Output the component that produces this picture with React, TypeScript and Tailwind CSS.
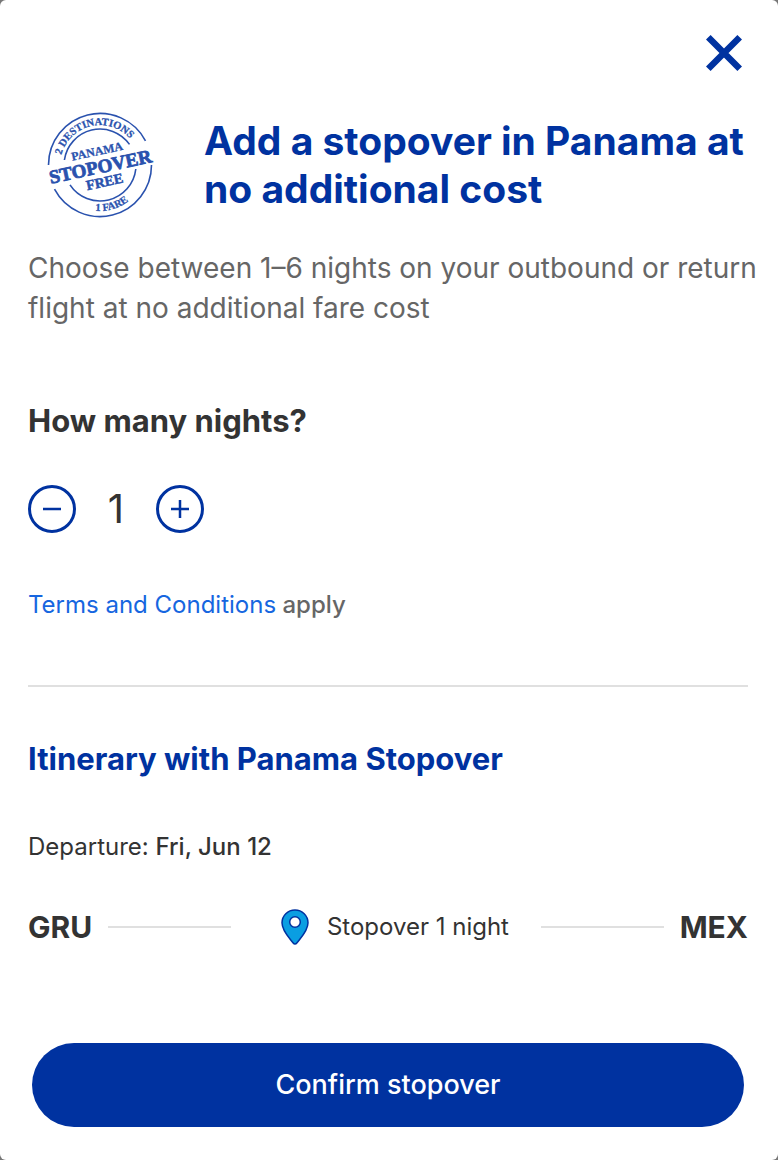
import React, { useState } from 'react';

const StampLogo: React.FC = () => (
  <svg viewBox="-54 -54 108 108" className="size-[108px] shrink-0" fill="none" role="img" aria-label="Panama Stopover">
    <defs>
      <path id="stamp-top" d="M-37.6 13.7A40 40 0 1 1 37.6 13.7" />
      <path id="stamp-bottom" d="M-46 0A46 46 0 0 0 46 0" />
    </defs>
    <g stroke="#2a52ae" strokeWidth="1.6">
      <path d="M-51.5 0A51.5 51.5 0 0 1 45.5 -24.2" />
      <path d="M-45.5 24.2A51.5 51.5 0 0 0 51.5 0" />
      <path d="M-35.6 -5A36 36 0 0 1 29.5 -20.6" />
      <path d="M-30 19.9A36 36 0 0 0 35.8 4" />
    </g>
    <g
      fill="#2a52ae"
      stroke="#2a52ae"
      strokeWidth="0.3"
      className="font-['Liberation_Serif',serif] font-bold"
      textAnchor="middle"
    >
      <text fontSize="10.5">
        <textPath href="#stamp-top" startOffset="44%">2 DESTINATIONS</textPath>
      </text>
      <text fontSize="10.5">
        <textPath href="#stamp-bottom" startOffset="59%">1 FARE</textPath>
      </text>
      <g transform="rotate(-12)">
        <text x="0" y="-10" fontSize="12">PANAMA</text>
        <text x="0" y="8" fontSize="19" strokeWidth="0.8">STOPOVER</text>
        <text x="1" y="22" fontSize="14" strokeWidth="0.5">FREE</text>
      </g>
    </g>
  </svg>
);

const PinIcon: React.FC = () => (
  <svg viewBox="0 0 28 36" className="h-9 w-7 shrink-0" aria-hidden="true">
    <path
      d="M14 1C6.8 1 1 6.6 1 13.8c0 8.4 7.500 15.200 11.200 20.200.9 1.200 2.700 1.200 3.600 0C19.500 29 27 22.200 27 13.800 27 6.600 21.200 1 14 1Z"
      fill="#0a9ee2"
      stroke="#0032a0"
      strokeWidth="1.5"
    />
    <circle cx="14" cy="13" r="5.3" fill="#fff" stroke="#0032a0" strokeWidth="1.5" />
  </svg>
);

const App: React.FC = () => {
  const [nights, setNights] = useState(1);

  return (
    <div className="min-h-screen bg-[#777] font-[Inter,sans-serif]">
      <main className="flex min-h-screen flex-col rounded-md bg-white px-7 pb-8 text-[#333]">
        <div className="flex justify-end pt-[33px]">
          <button type="button" aria-label="Close" className="mr-1.5 flex size-10 items-center justify-center">
            <svg viewBox="0 0 36 36" className="size-9" stroke="#0032a0" strokeWidth="6.5">
              <path d="M2.3 2.3L33.7 33.7M33.7 2.3L2.3 33.7" />
            </svg>
          </button>
        </div>

        <header className="mt-[38px] flex items-center gap-[50px] pl-[18px]">
          <StampLogo />
          <h1 className="text-[39px] leading-12 font-bold text-[#0032a0]">
            Add a stopover in Panama at no additional cost
          </h1>
        </header>

        <p className="-mr-3 mt-[29px] text-[28px] leading-10 text-[#666]">
          Choose between 1–6 nights on your outbound or return flight at no additional fare cost
        </p>

        <h2 className="mt-[73px] text-[31px] leading-10 font-bold">How many nights?</h2>
        <div className="mt-11 flex items-center">
          <button
            type="button"
            aria-label="Remove a night"
            onClick={() => setNights(Math.max(1, nights - 1))}
            className="flex size-12 items-center justify-center rounded-full border-3 border-[#0032a0]"
          >
            <svg viewBox="0 0 20 20" className="size-5" stroke="#0032a0" strokeWidth="2.5">
              <path d="M1 10H19" />
            </svg>
          </button>
          <output className="w-20 text-center text-[40px] leading-12">{nights}</output>
          <button
            type="button"
            aria-label="Add a night"
            onClick={() => setNights(Math.min(6, nights + 1))}
            className="flex size-12 items-center justify-center rounded-full border-3 border-[#0032a0]"
          >
            <svg viewBox="0 0 20 20" className="size-5" stroke="#0032a0" strokeWidth="2.5">
              <path d="M1 10H19M10 1V19" />
            </svg>
          </button>
        </div>

        <p className="mt-[52px] text-2xl leading-10 font-medium text-[#666]">
          <a href="#terms" className="font-normal text-[#1666e0]">Terms and Conditions</a> apply
        </p>

        <hr className="mt-[60px] mr-[2px] border-t-2 border-[#e0e0e0]" />

        <h2 className="mt-[52px] text-[31px] leading-10 font-bold text-[#0032a0]">Itinerary with Panama Stopover</h2>
        <p className="mt-12 text-2xl leading-10">
          Departure: <span className="font-medium">Fri, Jun 12</span>
        </p>

        <div className="mt-10 mr-[2px] flex items-center">
          <span className="text-[30px] leading-10 font-bold">GRU</span>
          <span className="mr-[50px] ml-4 h-[2px] flex-1 bg-[#e0e0e0]" />
          <PinIcon />
          <span className="ml-[18px] text-2xl leading-10">
            Stopover {nights} {nights === 1 ? 'night' : 'nights'}
          </span>
          <span className="mr-4 ml-8 h-[2px] flex-1 bg-[#e0e0e0]" />
          <span className="text-[30px] leading-10 font-bold">MEX</span>
        </div>

        <button
          type="button"
          className="mt-24 mr-[6px] ml-1 h-[84px] rounded-full bg-[#0032a0] text-[27px] font-medium text-white"
        >
          Confirm stopover
        </button>
      </main>
    </div>
  );
};

export default App;
